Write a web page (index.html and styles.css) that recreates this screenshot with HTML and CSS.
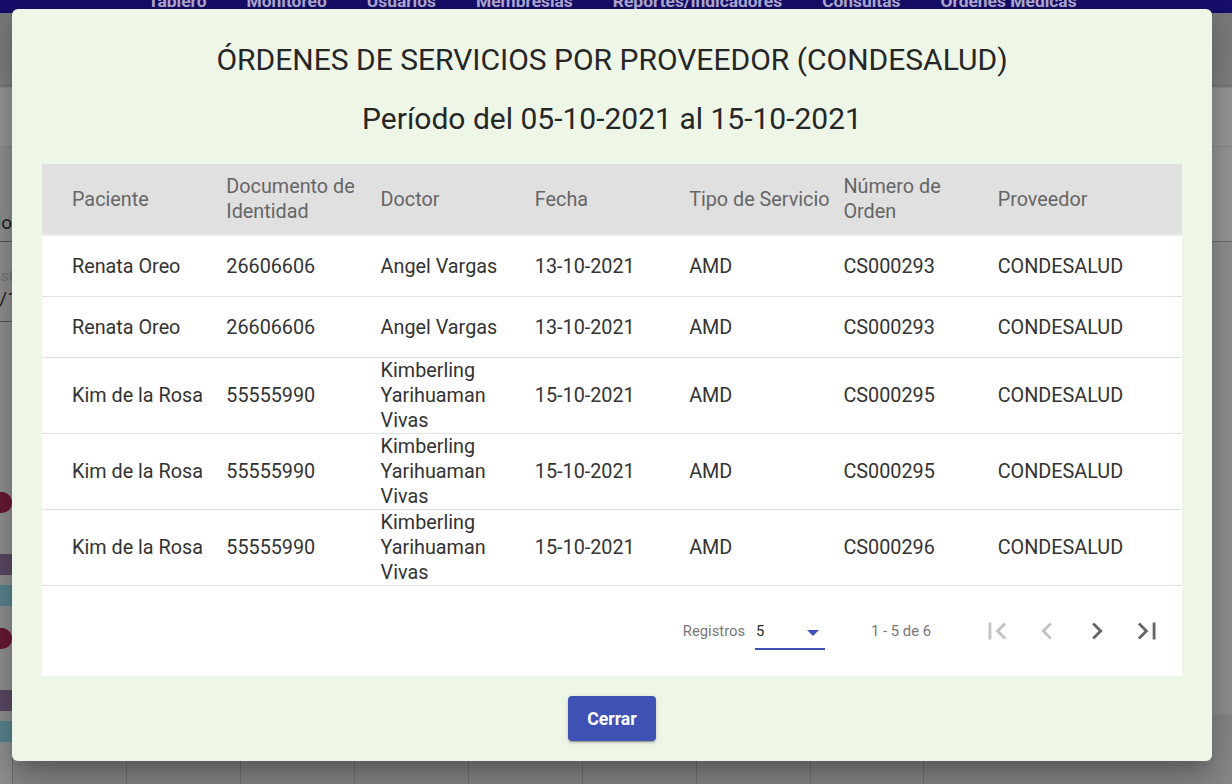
FILE: index.html
```
<!DOCTYPE html>
<html lang="es">
<head>
<meta charset="utf-8">
<title>Órdenes de servicios por proveedor</title>
<link rel="stylesheet" href="styles.css">
</head>
<body>
<div class="page">
  <nav class="topnav">
    <div class="navitems">
      <span>Tablero</span><span>Monitoreo</span><span>Usuarios</span><span>Membresias</span><span>Reportes/Indicadores</span><span>Consultas</span><span>Ordenes Medicas</span>
    </div>
  </nav>
  <div class="toolbar"></div>
  <div class="subbar"></div>
  <div class="content">
    <div class="side">
      <div class="field field-one"><span class="fvalue">Todo</span></div>
      <div class="field field-two"><span class="flabel">Hasta</span><span class="fvalue">15/10/2021</span></div>
      <div class="events">
        <div class="chip chip-red"></div>
        <div class="chip chip-purple"></div>
        <div class="chip chip-teal"></div>
        <div class="chip chip-red chip-gap"></div>
        <div class="chip chip-purple"></div>
        <div class="chip chip-teal"></div>
      </div>
    </div>
    <div class="main">
      <div class="mainhead"></div>
      <div class="calendar">
        <div class="cal-cell"></div><div class="cal-cell"></div><div class="cal-cell"></div><div class="cal-cell"></div>
        <div class="cal-cell"></div><div class="cal-cell"></div><div class="cal-cell"></div><div class="cal-cell cal-last"></div>
      </div>
    </div>
  </div>
</div>

<div class="dialog">
  <h1 class="title">ÓRDENES DE SERVICIOS POR PROVEEDOR (CONDESALUD)</h1>
  <h2 class="period">Período del 05-10-2021 al 15-10-2021</h2>
  <div class="table">
    <div class="row thead">
      <div>Paciente</div><div>Documento de Identidad</div><div>Doctor</div><div>Fecha</div><div>Tipo de Servicio</div><div>Número de Orden</div><div>Proveedor</div>
    </div>
    <div class="row">
      <div>Renata Oreo</div><div>26606606</div><div>Angel Vargas</div><div>13-10-2021</div><div>AMD</div><div>CS000293</div><div>CONDESALUD</div>
    </div>
    <div class="row">
      <div>Renata Oreo</div><div>26606606</div><div>Angel Vargas</div><div>13-10-2021</div><div>AMD</div><div>CS000293</div><div>CONDESALUD</div>
    </div>
    <div class="row">
      <div>Kim de la Rosa</div><div>55555990</div><div>Kimberling Yarihuaman Vivas</div><div>15-10-2021</div><div>AMD</div><div>CS000295</div><div>CONDESALUD</div>
    </div>
    <div class="row">
      <div>Kim de la Rosa</div><div>55555990</div><div>Kimberling Yarihuaman Vivas</div><div>15-10-2021</div><div>AMD</div><div>CS000295</div><div>CONDESALUD</div>
    </div>
    <div class="row">
      <div>Kim de la Rosa</div><div>55555990</div><div>Kimberling Yarihuaman Vivas</div><div>15-10-2021</div><div>AMD</div><div>CS000296</div><div>CONDESALUD</div>
    </div>
    <div class="paginator">
      <span class="pg-label">Registros</span>
      <div class="pg-select"><span class="pg-value">5</span><span class="pg-arrow"></span></div>
      <span class="pg-range">1 - 5 de 6</span>
      <div class="pg-buttons">
        <span class="pg-btn disabled"><svg viewBox="0 0 24 24"><path d="M18.41 16.59L13.82 12l4.59-4.59L17 6l-6 6 6 6zM6 6h2v12H6z"/></svg></span>
        <span class="pg-btn disabled"><svg viewBox="0 0 24 24"><path d="M15.41 7.41L14 6l-6 6 6 6 1.41-1.41L10.83 12z"/></svg></span>
        <span class="pg-btn"><svg viewBox="0 0 24 24"><path d="M10 6L8.59 7.41 13.17 12l-4.58 4.59L10 18l6-6z"/></svg></span>
        <span class="pg-btn"><svg viewBox="0 0 24 24"><path d="M5.59 7.41L10.18 12l-4.59 4.59L7 18l6-6-6-6zM16 6h2v12h-2z"/></svg></span>
      </div>
    </div>
  </div>
  <div class="actions"><button class="btn" type="button">Cerrar</button></div>
</div>
</body>
</html>
```
FILE: styles.css
```
* { box-sizing: border-box; }
html, body { margin: 0; padding: 0; }
body {
  width: 1232px;
  height: 784px;
  overflow: hidden;
  font-family: Roboto, "Noto Sans", "Liberation Sans", sans-serif;
  background: #8f8f8f;
  position: relative;
}

/* ---------- underlying page (dimmed) ---------- */
.page {
  height: 784px;
  display: flex;
  flex-direction: column;
}
.topnav {
  height: 13px;
  flex: 0 0 13px;
  background: #170e6b;
  overflow: hidden;
}
.navitems {
  display: flex;
  gap: 40px;
  padding-left: 148px;
  margin-top: -7px;
  font-size: 17.4px;
  line-height: 16px;
  font-weight: 700;
  color: #b6b0d8;
  white-space: nowrap;
}
.toolbar {
  flex: 0 0 72px;
  background: linear-gradient(#7a7a7a, #838383);
  box-shadow: 0 2px 2px rgba(0,0,0,.25);
  position: relative;
  z-index: 1;
}
.subbar {
  flex: 0 0 62px;
  background: #9a9a9a;
  border-bottom: 1px solid #8a8a8a;
}
.content {
  flex: 1 1 auto;
  display: grid;
  grid-template-columns: 12px 1fr;
  background: #929292;
}
.side {
  position: relative;
}
.field {
  border-bottom: 1px solid #555;
  white-space: nowrap;
}
.field-one {
  width: 90px;
  margin-left: -78px;
  height: 95px;
  text-align: right;
  padding-top: 64px;
  font-size: 19px;
  line-height: 24px;
  color: #1e1e1e;
}
.field-two {
  width: 140px;
  margin-left: -22px;
  height: 80px;
  display: flex;
  flex-direction: column;
  padding-top: 24px;
}
.flabel {
  font-size: 15px;
  line-height: 20px;
  color: #777;
  padding-left: 4px;
}
.fvalue {
  font-size: 19px;
  line-height: 26px;
  color: #1e1e1e;
}
.field-one .fvalue { line-height: 24px; }
.events {
  margin-left: -40px;
  padding-top: 170px;
  display: flex;
  flex-direction: column;
}
.chip { height: 21px; }
.chip-red {
  width: 52px;
  background: #6a1a37;
  border-radius: 0 10px 10px 0;
}
.chip-purple {
  width: 90px;
  background: #5d4a67;
  margin-top: 41px;
}
.chip-teal {
  width: 90px;
  background: #5a8691;
  margin-top: 10px;
}
.chip-gap { margin-top: 22px; }

.main {
  display: flex;
  flex-direction: column;
}
.mainhead {
  height: 95px;
  border-bottom: 1px solid #6e6e6e;
  background: #999;
}
.calendar {
  margin-top: auto;
  display: flex;
  height: 70px;
  background: #8a8a8a;
}
.cal-cell {
  width: 114px;
  border-left: 1px solid #747474;
}
.cal-last { border-right: 1px solid #747474; }

/* ---------- dialog ---------- */
.dialog {
  position: absolute;
  left: 12px;
  top: 9px;
  width: 1200px;
  height: 752px;
  padding: 33px 30px 0;
  background: #eef6e8;
  border-radius: 6px;
  box-shadow: 0 11px 15px -7px rgba(0,0,0,.2), 0 24px 38px 3px rgba(0,0,0,.14), 0 9px 46px 8px rgba(0,0,0,.12);
  z-index: 10;
}
.title {
  margin: 0;
  font-size: 30px;
  font-weight: 400;
  line-height: 36px;
  text-align: center;
  color: #262626;
}
.period {
  margin: 21px 0 0;
  font-size: 30px;
  font-weight: 400;
  line-height: 40px;
  text-align: center;
  color: #262626;
}
.table {
  margin-top: 25px;
  background: #fff;
}
.row {
  display: grid;
  grid-template-columns: repeat(7, 1fr);
  padding: 0 30px;
  min-height: 61px;
  align-items: center;
  border-bottom: 1px solid #e0e0e0;
  font-size: 19.8px;
  line-height: 25px;
  color: #333;
}
.thead {
  min-height: 72px;
  background: #e0e0e0;
  border-bottom: 2px solid #ececec;
  color: #666;
}
.paginator {
  height: 90px;
  display: flex;
  align-items: center;
  justify-content: flex-end;
  padding-right: 10px;
  font-size: 14.8px;
  color: #777;
}
.pg-select {
  position: relative;
  width: 70px;
  height: 36px;
  margin-left: 10px;
  margin-top: 2px;
  display: flex;
  align-items: center;
  border-bottom: 2px solid #3f51b5;
  padding-left: 1px;
}
.pg-value { color: #2a2a2a; }
.pg-arrow {
  position: absolute;
  right: 6px;
  top: 16px;
  width: 0;
  height: 0;
  border-left: 6px solid transparent;
  border-right: 6px solid transparent;
  border-top: 6px solid #3f51b5;
}
.pg-range { margin-left: 46px; }
.pg-buttons {
  display: flex;
  margin-left: 41px;
}
.pg-btn {
  width: 50px;
  height: 50px;
  display: flex;
  align-items: center;
  justify-content: center;
  fill: #666;
}
.pg-btn.disabled { fill: #c2c2c2; }
.pg-btn svg { width: 34px; height: 34px; }

.actions {
  display: flex;
  justify-content: center;
  margin-top: 20px;
}
.btn {
  width: 88px;
  height: 45px;
  border: 0;
  border-radius: 4px;
  background: #3f51b5;
  color: #fff;
  font-family: Roboto, "Noto Sans", "Liberation Sans", sans-serif;
  font-size: 17.6px;
  font-weight: 700;
  box-shadow: 0 3px 1px -2px rgba(0,0,0,.2), 0 2px 2px 0 rgba(0,0,0,.14), 0 1px 5px 0 rgba(0,0,0,.12);
  padding: 0;
}
```
